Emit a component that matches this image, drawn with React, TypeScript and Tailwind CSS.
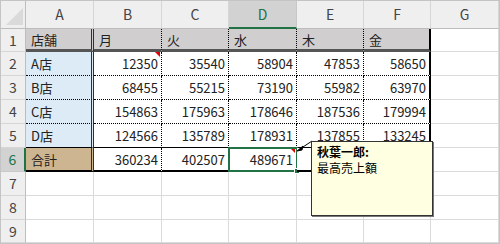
import React from 'react';

const cols = ['A', 'B', 'C', 'D', 'E', 'F', 'G'];

const data: (string | number)[][] = [
  ['店舗', '月', '火', '水', '木', '金'],
  ['A店', 12350, 35540, 58904, 47853, 58650],
  ['B店', 68455, 55215, 73190, 55982, 63970],
  ['C店', 154863, 175963, 178646, 187536, 179994],
  ['D店', 124566, 135789, 178931, 137855, 133245],
  ['合計', 360234, 402507, 489671, 429226, 435859],
];

const TOTAL_ROWS = 9;

// border + fill for cells inside the A1:F6 table
const tableCell = (r: number, c: number) => {
  const out: string[] = [];

  if (c === 1) out.push('border-r-[3px] border-r-[#303030] [border-right-style:double]');
  else if (c === 6) out.push('border-r-2 border-r-black');
  else out.push('border-r border-r-black [border-right-style:dotted]');

  if (r === 1) out.push('border-b-[3px] border-b-[#555]');
  else if (r === 5) out.push('border-b border-b-black');
  else if (r === 6) out.push('border-b-2 border-b-black');
  else out.push('border-b border-b-black [border-bottom-style:dotted]');

  if (r === 1) out.push('bg-[#d0cece]');
  else if (c === 1 && r === 6) out.push('bg-[#cdb592]');
  else if (c === 1) out.push('bg-[#ddebf7]');
  else out.push('bg-white');

  if (r === 1 || c === 1) out.push('justify-start pl-[5px]');
  else out.push('justify-end pr-[3px]');

  return out.join(' ');
};

const RedMark = () => (
  <span className="absolute right-[1px] top-0 w-0 h-0 border-l-[5px] border-l-transparent border-t-[5px] border-t-[#e00000]" />
);

const Cell: React.FC<{ r: number; c: number }> = ({ r, c }) => {
  if (r === 0 && c === 0) {
    return (
      <div className="relative bg-[#efefef] border-r border-b border-r-[#bdbdbd] border-b-[#bdbdbd]">
        <svg className="absolute right-[2px] bottom-[3px]" width="17" height="17">
          <polygon points="17,0 17,17 0,17" fill="#dadada" />
        </svg>
      </div>
    );
  }

  if (r === 0) {
    const active = c === 4;
    return (
      <div
        className={
          'flex items-center justify-center text-[14px] ' +
          (active
            ? 'bg-[#d2d2d2] text-[#217346] border-r border-r-[#c8c8c8] border-b-2 border-b-[#217346]'
            : 'bg-[#efefef] text-[#444] border-r border-r-[#d6d6d6] border-b border-b-[#bdbdbd]')
        }
      >
        {cols[c - 1]}
      </div>
    );
  }

  if (c === 0) {
    const active = r === 6;
    return (
      <div
        className={
          'flex items-center justify-center text-[14px] ' +
          (active
            ? 'bg-[#d2d2d2] text-[#217346] border-b border-b-[#c8c8c8] border-r-2 border-r-[#217346]'
            : 'bg-[#efefef] text-[#444] border-b border-b-[#d6d6d6] border-r border-r-[#bdbdbd]')
        }
      >
        {r}
      </div>
    );
  }

  if (r <= 6 && c <= 6) {
    const v = data[r - 1][c - 1];
    return (
      <div className={'relative flex items-center text-[13px] text-[#222] ' + tableCell(r, c)}>
        <span className="leading-none">{v}</span>
        {((r === 2 && c === 2) || (r === 6 && c === 4)) && <RedMark />}
        {r === 6 && c === 4 && (
          <span className="absolute -left-px -top-px -right-[2px] -bottom-[2px] border-2 border-[#217346]">
            <span className="absolute -right-[4px] -bottom-[4px] w-[6px] h-[6px] bg-[#217346] border border-white" />
          </span>
        )}
      </div>
    );
  }

  return <div className="bg-white border-r border-b border-[#dadada]" />;
};

const App: React.FC = () => {
  const cells: React.ReactNode[] = [];
  for (let r = 0; r <= TOTAL_ROWS; r++) {
    for (let c = 0; c <= cols.length; c++) {
      cells.push(<Cell key={`${r}-${c}`} r={r} c={c} />);
    }
  }

  return (
    <div className="relative w-[500px] h-[244px] overflow-hidden bg-white border border-[#c4c4c4] font-['Noto_Sans','Noto_Sans_CJK_JP',sans-serif]">
      <div className="grid grid-cols-[25px_68px_68px_67px_68px_67px_67px_68px] grid-rows-[28px_23px_24px_24px_24px_24px_24px_24px_24px_23px] font-['Noto_Sans_CJK_JP','Noto_Sans',sans-serif]">
        {cells}
      </div>

      {/* comment pointer */}
      <svg className="absolute left-[294px] top-[137px]" width="20" height="16">
        <line x1="17" y1="3" x2="5" y2="11" stroke="#000" strokeWidth="1" />
        <polygon points="2,13 8,8 7,12" fill="#000" stroke="#000" strokeWidth="1" />
      </svg>

      {/* comment box */}
      <div className="absolute left-[310px] top-[140px] w-[122px] h-[75px] bg-[#ffffe1] border border-[#333] shadow-[1px_1px_0_#777] px-[5px] pt-[2px] font-['Noto_Sans_CJK_JP',sans-serif] text-[12px] leading-[16px] text-black">
        <div className="font-bold">秋葉一郎:</div>
        <div>最高売上額</div>
      </div>
    </div>
  );
};

export default App;
